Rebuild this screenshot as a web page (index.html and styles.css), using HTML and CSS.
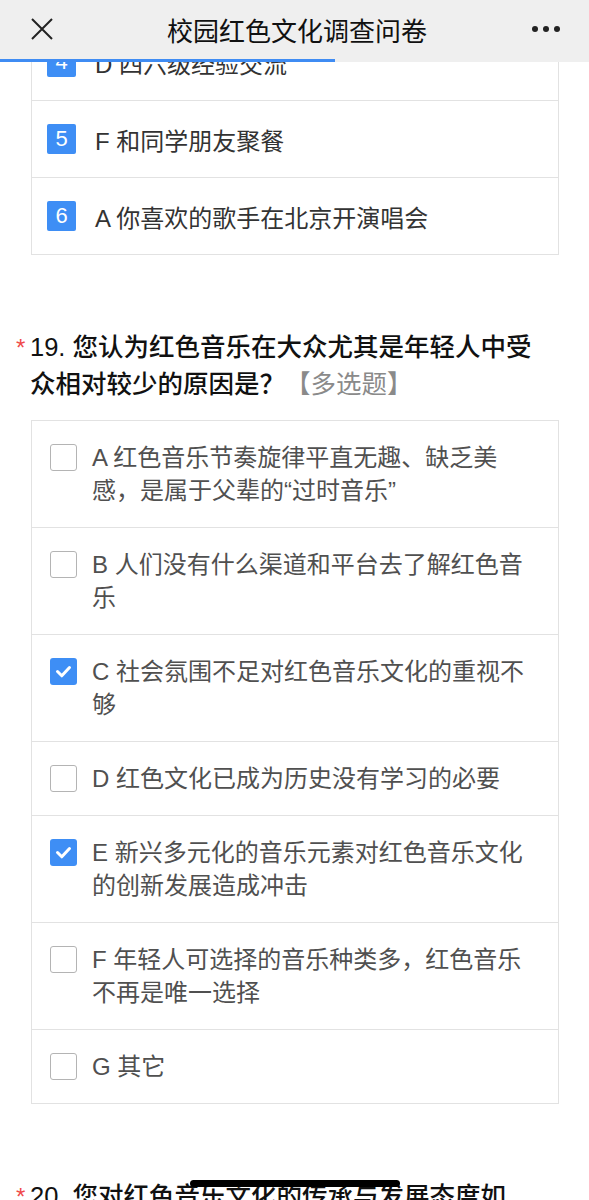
FILE: index.html
```html
<!DOCTYPE html>
<html lang="zh-CN">
<head>
    <meta charset="UTF-8">
    <meta name="viewport" content="width=device-width, initial-scale=1.0">
    <title>校园红色文化调查问卷</title>
    <link rel="stylesheet" href="styles.css">
</head>
<body>
    <header class="topbar">
        <div class="topbar-close">
            <svg width="24" height="24" viewBox="0 0 24 24">
                <path d="M2 2 L22 22 M22 2 L2 22" stroke="#222" stroke-width="2" fill="none"/>
            </svg>
        </div>
        <div class="topbar-title">校园红色文化调查问卷</div>
        <div class="topbar-more">
            <span class="dot"></span><span class="dot"></span><span class="dot"></span>
        </div>
        <div class="progress"></div>
    </header>

    <main class="survey">
        <!-- 18. 排序题（上半部分已滚出） -->
        <div class="card">
            <div class="rank-row">
                <span class="rank-badge">4</span>
                <span class="rank-text">D 四六级经验交流</span>
            </div>
            <div class="rank-row">
                <span class="rank-badge">5</span>
                <span class="rank-text">F 和同学朋友聚餐</span>
            </div>
            <div class="rank-row">
                <span class="rank-badge">6</span>
                <span class="rank-text">A 你喜欢的歌手在北京开演唱会</span>
            </div>
        </div>

        <section class="question">
            <h2 class="q-title">
                <span class="req">*</span>
                <span class="q-text">19. 您认为红色音乐在大众尤其是年轻人中受众相对较少的原因是？<span class="q-type">【多选题】</span></span>
            </h2>
            <div class="card">
                <label class="option">
                    <span class="check"></span>
                    <span class="opt-text">A 红色音乐节奏旋律平直无趣、缺乏美感，是属于父辈的“过时音乐”</span>
                </label>
                <label class="option">
                    <span class="check"></span>
                    <span class="opt-text">B 人们没有什么渠道和平台去了解红色音乐</span>
                </label>
                <label class="option">
                    <span class="check checked">
                        <svg width="27" height="27" viewBox="0 0 27 27"><polyline points="7.5,13.5 11.8,17.8 19.5,9.5" stroke="#fff" stroke-width="3" fill="none" stroke-linecap="round" stroke-linejoin="round"/></svg>
                    </span>
                    <span class="opt-text">C 社会氛围不足对红色音乐文化的重视不够</span>
                </label>
                <label class="option">
                    <span class="check"></span>
                    <span class="opt-text">D 红色文化已成为历史没有学习的必要</span>
                </label>
                <label class="option">
                    <span class="check checked">
                        <svg width="27" height="27" viewBox="0 0 27 27"><polyline points="7.5,13.5 11.8,17.8 19.5,9.5" stroke="#fff" stroke-width="3" fill="none" stroke-linecap="round" stroke-linejoin="round"/></svg>
                    </span>
                    <span class="opt-text">E 新兴多元化的音乐元素对红色音乐文化的创新发展造成冲击</span>
                </label>
                <label class="option">
                    <span class="check"></span>
                    <span class="opt-text">F 年轻人可选择的音乐种类多，红色音乐不再是唯一选择</span>
                </label>
                <label class="option">
                    <span class="check"></span>
                    <span class="opt-text">G 其它</span>
                </label>
            </div>
        </section>

        <section class="question">
            <h2 class="q-title">
                <span class="req">*</span>
                <span class="q-text">20. 您对红色音乐文化的传承与发展态度如何？<span class="q-type">【单选题】</span></span>
            </h2>
            <div class="card">
                <label class="option">
                    <span class="check round"></span>
                    <span class="opt-text">A 非常支持</span>
                </label>
                <label class="option">
                    <span class="check round"></span>
                    <span class="opt-text">B 比较支持</span>
                </label>
                <label class="option">
                    <span class="check round"></span>
                    <span class="opt-text">C 无所谓</span>
                </label>
            </div>
        </section>
    </main>

    <div class="home-indicator"></div>
</body>
</html>
```

FILE: styles.css
```css
* {
    margin: 0;
    padding: 0;
    box-sizing: border-box;
}

body {
    background: #fff;
    font-family: "Liberation Sans", "Noto Sans CJK SC", sans-serif;
    color: #333;
}

/* 顶部导航栏，盖在内容上 */
.topbar {
    position: fixed;
    top: 0;
    left: 0;
    width: 100%;
    height: 62px;
    background: #efefef;
    display: flex;
    align-items: center;
    justify-content: space-between;
    padding: 0 29px 4px 30px;
    z-index: 10;
}

.topbar-close {
    width: 24px;
    height: 24px;
    display: flex;
}

.topbar-title {
    font-size: 26px;
    font-weight: normal;
    color: #111;
    margin-left: 8px;
}

.topbar-more {
    display: flex;
    gap: 5px;
}

.dot {
    width: 6px;
    height: 6px;
    border-radius: 50%;
    background: #222;
}

.progress {
    position: absolute;
    left: 0;
    bottom: 0;
    width: 335px;
    height: 3px;
    background: #3f8cf3;
}

.survey {
    padding: 23px 30px 120px 31px;
}

.card {
    border: 1px solid #e2e2e2;
    background: #fff;
}

/* 排序题 */
.rank-row {
    display: flex;
    align-items: center;
    height: 77px;
    padding-left: 15px;
    border-bottom: 1px solid #e2e2e2;
}

.rank-row:last-child {
    border-bottom: none;
    height: 76px;
}

.rank-badge {
    width: 29px;
    height: 30px;
    border-radius: 2px;
    background: #3e8ef5;
    color: #fff;
    font-size: 22px;
    display: flex;
    align-items: center;
    justify-content: center;
}

.rank-text {
    margin-left: 19px;
    font-size: 24px;
    color: #333;
}

/* 题目 */
.question {
    margin-top: 74px;
}

.q-title {
    display: flex;
    font-size: 25.5px;
    font-weight: 500;
    line-height: 37px;
    color: #111;
    margin-left: -15px;
    margin-right: 19px;
    margin-bottom: 17px;
}

.req {
    width: 14px;
    flex-shrink: 0;
    color: #ef4a4a;
    font-weight: normal;
    font-size: 24px;
}

.q-type {
    color: #8a8a8a;
    font-weight: normal;
}

/* 选项 */
.option {
    display: flex;
    align-items: flex-start;
    padding: 20px 20px 20px 18px;
    border-bottom: 1px solid #e2e2e2;
}

.option:last-child {
    border-bottom: none;
}

.check {
    flex-shrink: 0;
    width: 27px;
    height: 27px;
    margin-top: 3px;
    border: 1.5px solid #b4b4b4;
    border-radius: 3px;
    display: flex;
}

.check.checked {
    border: none;
    background: #3e8ef5;
}

.check.round {
    border-radius: 50%;
}

.opt-text {
    margin-left: 15px;
    font-size: 24px;
    line-height: 33px;
    color: #505050;
}

.home-indicator {
    position: fixed;
    bottom: 13px;
    left: 50%;
    width: 210px;
    height: 7px;
    margin-left: -105px;
    border-radius: 4px;
    background: #000;
    z-index: 20;
}
```
